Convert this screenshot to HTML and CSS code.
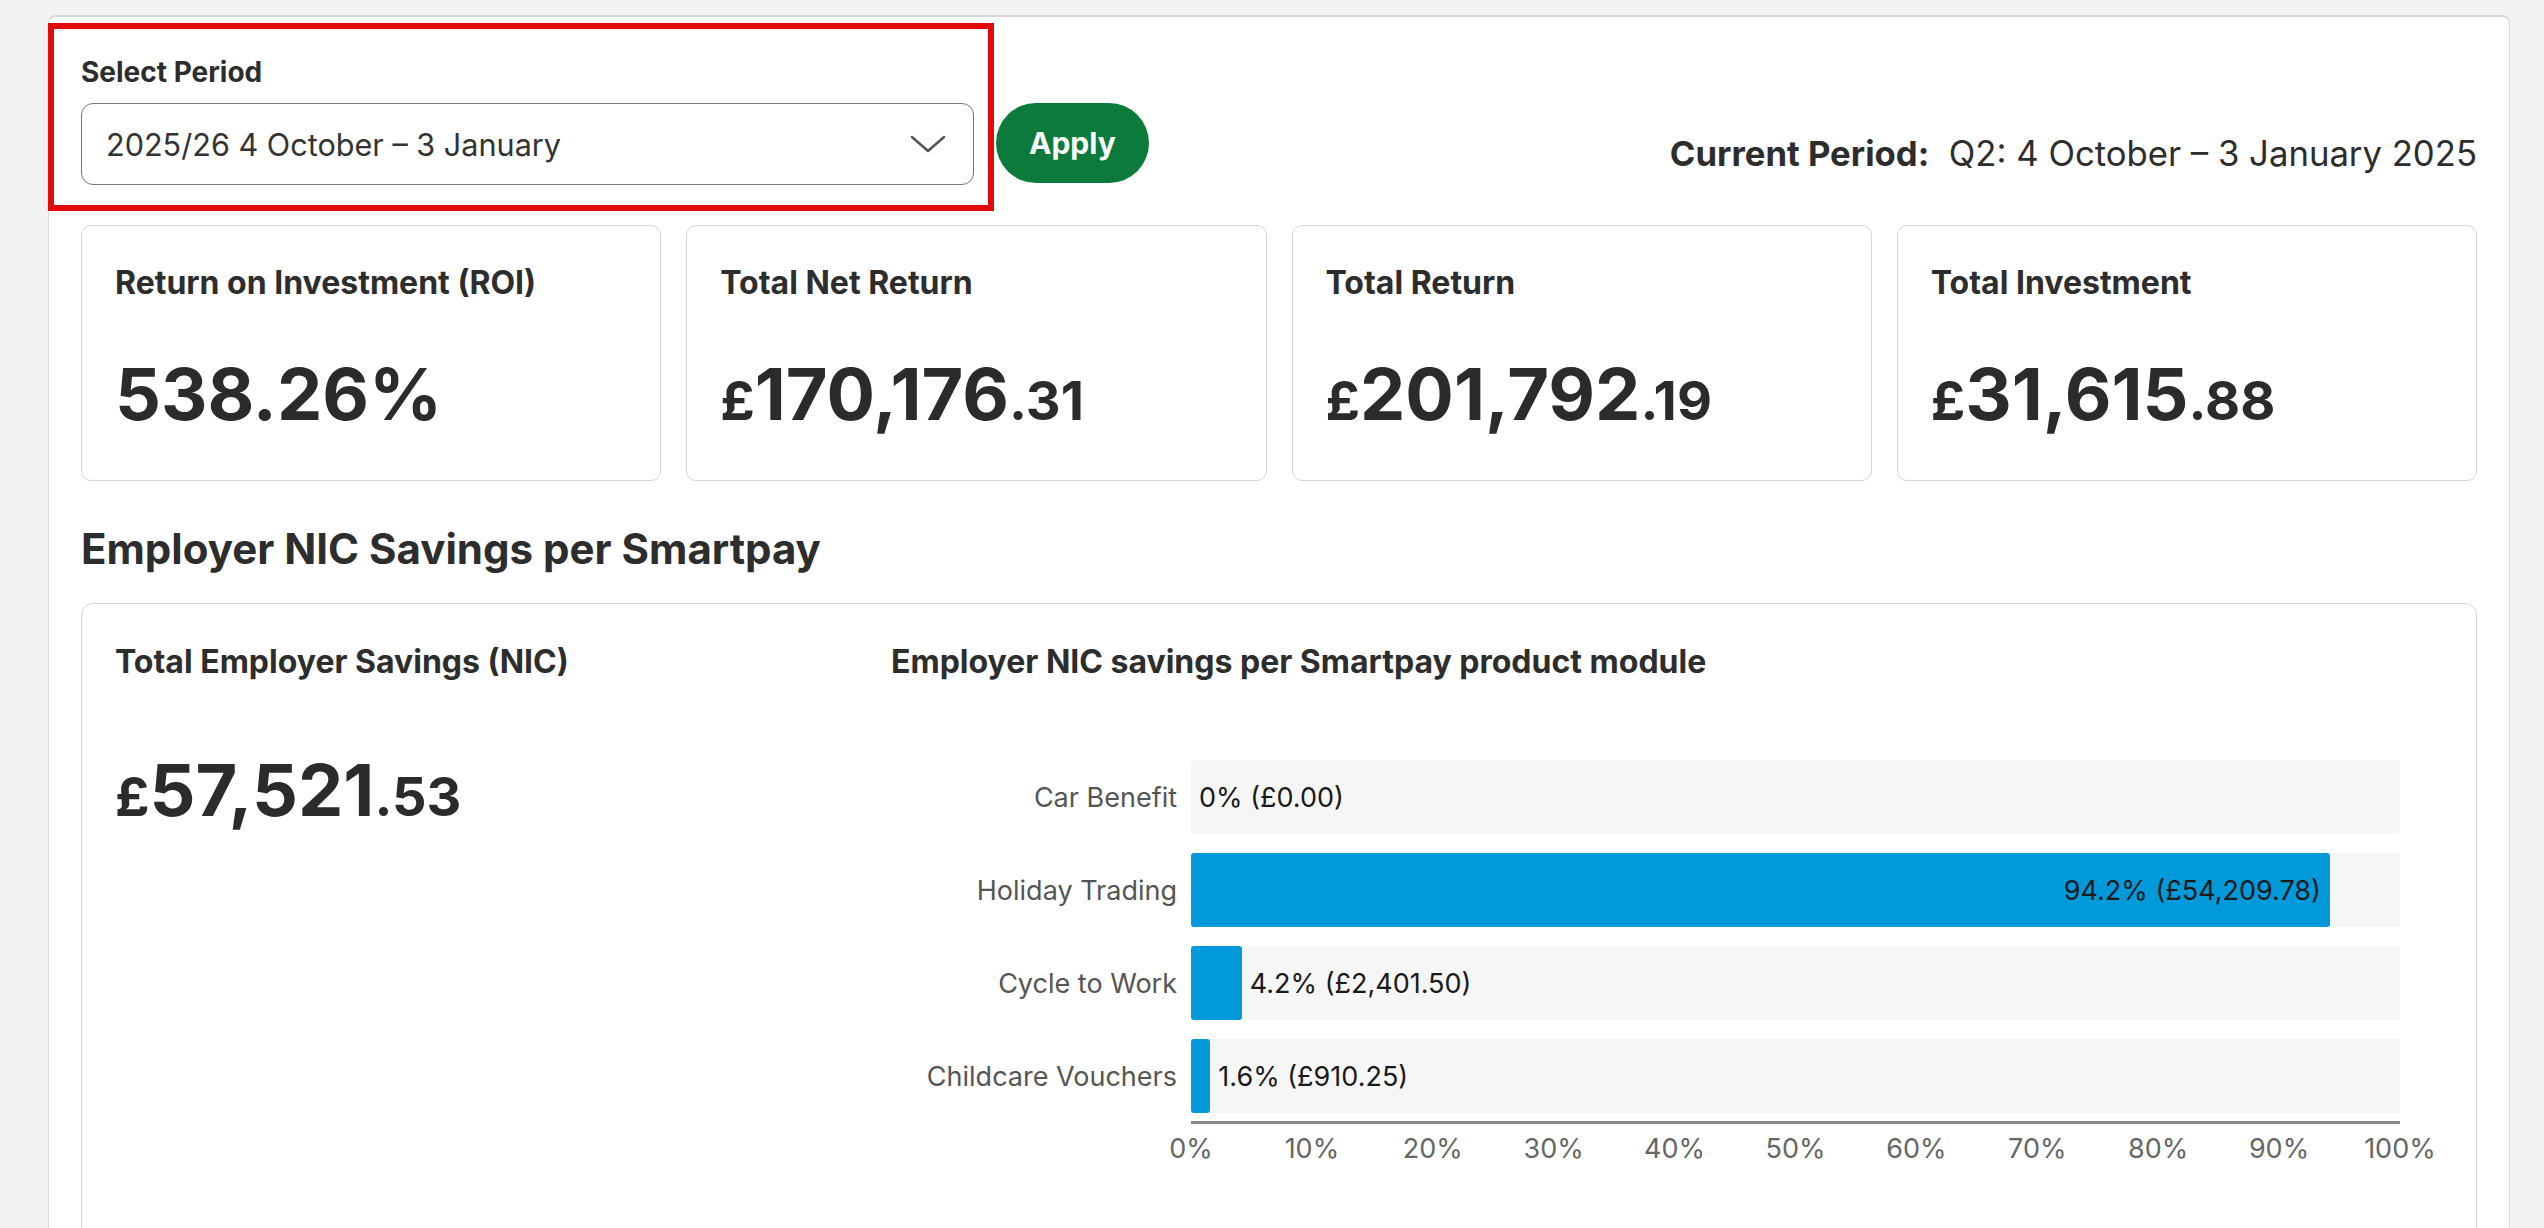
FILE: index.html
```html
<!DOCTYPE html>
<html lang="en">
<head>
    <meta charset="UTF-8">
    <meta name="viewport" content="width=device-width, initial-scale=1.0">
    <title>Smartpay ROI</title>
    <link rel="stylesheet" href="styles.css">
</head>
<body>
    <div class="page">
        <div class="panel">
            <!-- Period picker -->
            <div class="toolbar">
                <form class="period-form">
                    <div class="period-field">
                        <label class="field-label">Select Period</label>
                        <div class="select">
                            <span class="select-value">2025/26 4 October – 3 January</span>
                            <svg class="chevron" width="38" height="20" viewBox="0 0 38 20">
                                <path d="M3 3 L19 17 L35 3" fill="none" stroke="#555" stroke-width="2.5" stroke-linecap="round" stroke-linejoin="round"/>
                            </svg>
                        </div>
                    </div>
                    <button class="btn-apply" type="button">Apply</button>
                </form>
                <div class="current-period"><strong>Current Period:</strong>&nbsp; Q2: 4 October – 3 January 2025</div>
            </div>

            <!-- Headline figures -->
            <div class="stats">
                <div class="stat-card">
                    <div class="stat-title">Return on Investment (ROI)</div>
                    <div class="stat-value">538.26%</div>
                </div>
                <div class="stat-card">
                    <div class="stat-title">Total Net Return</div>
                    <div class="stat-value"><span class="small">£</span>170,176<span class="small">.31</span></div>
                </div>
                <div class="stat-card">
                    <div class="stat-title">Total Return</div>
                    <div class="stat-value"><span class="small">£</span>201,792<span class="small">.19</span></div>
                </div>
                <div class="stat-card">
                    <div class="stat-title">Total Investment</div>
                    <div class="stat-value"><span class="small">£</span>31,615<span class="small">.88</span></div>
                </div>
            </div>

            <h2 class="section-title">Employer NIC Savings per Smartpay</h2>

            <div class="savings-panel">
                <div class="savings-total">
                    <div class="stat-title">Total Employer Savings (NIC)</div>
                    <div class="stat-value total-value"><span class="small">£</span>57,521<span class="small">.53</span></div>
                </div>
                <div class="savings-chart">
                    <div class="stat-title">Employer NIC savings per Smartpay product module</div>
                    <div class="bar-chart">
                        <div class="bar-rows">
                            <div class="bar-row">
                                <span class="bar-label">Car Benefit</span>
                                <div class="bar-track">
                                    <div class="bar-fill" style="width: 0%"></div>
                                    <span class="bar-value">0% (£0.00)</span>
                                </div>
                            </div>
                            <div class="bar-row">
                                <span class="bar-label">Holiday Trading</span>
                                <div class="bar-track">
                                    <div class="bar-fill" style="width: 94.2%"><span class="bar-value inside">94.2% (£54,209.78)</span></div>
                                </div>
                            </div>
                            <div class="bar-row">
                                <span class="bar-label">Cycle to Work</span>
                                <div class="bar-track">
                                    <div class="bar-fill" style="width: 4.2%"></div>
                                    <span class="bar-value">4.2% (£2,401.50)</span>
                                </div>
                            </div>
                            <div class="bar-row">
                                <span class="bar-label">Childcare Vouchers</span>
                                <div class="bar-track">
                                    <div class="bar-fill" style="width: 1.6%"></div>
                                    <span class="bar-value">1.6% (£910.25)</span>
                                </div>
                            </div>
                        </div>
                        <div class="bar-axis">
                            <span class="tick">0%</span>
                            <span class="tick">10%</span>
                            <span class="tick">20%</span>
                            <span class="tick">30%</span>
                            <span class="tick">40%</span>
                            <span class="tick">50%</span>
                            <span class="tick">60%</span>
                            <span class="tick">70%</span>
                            <span class="tick">80%</span>
                            <span class="tick">90%</span>
                            <span class="tick">100%</span>
                        </div>
                    </div>
                </div>
            </div>
        </div>
    </div>
</body>
</html>
```

FILE: styles.css
```css
body {
    margin: 0;
    padding: 0;
    height: 100vh;
    background-color: #f2f2f2;
    font-family: Inter, "Noto Sans", Arial, sans-serif;
    color: #2d2d2d;
    overflow: hidden;
}

.page {
    padding: 15px 34px 0 48px;
}

.panel {
    background: #fff;
    border: 1px solid #dcdcdc;
    border-top: 2px solid #d8d8d8;
    border-radius: 8px;
    padding: 39px 32px 60px;
    min-height: 1300px;
}

/* toolbar */
.toolbar {
    display: flex;
    justify-content: space-between;
    align-items: flex-end;
}

.period-form {
    display: flex;
    align-items: flex-end;
    gap: 22px;
}

.period-field {
    position: relative;
    display: flex;
    flex-direction: column;
    gap: 15px;
}

/* red highlight drawn round the picker */
.period-field::after {
    content: "";
    position: absolute;
    left: -33px;
    right: -20px;
    top: -33px;
    bottom: -26px;
    border: 6px solid #e30a0a;
    pointer-events: none;
}

.field-label {
    font-size: 28px;
    font-weight: 700;
    line-height: 32px;
}

.select {
    width: 893px;
    height: 82px;
    box-sizing: border-box;
    border: 1.5px solid #777;
    border-radius: 12px;
    display: flex;
    align-items: center;
    justify-content: space-between;
    padding: 0 26px 0 24px;
}

.select-value {
    font-size: 30.6px;
    color: #333;
}

.btn-apply {
    height: 80px;
    padding: 0 33px;
    margin-bottom: 2px;
    border: none;
    border-radius: 40px;
    background: #0b7a3b;
    color: #fff;
    font-family: inherit;
    font-size: 30px;
    font-weight: 700;
}

.current-period {
    font-size: 34.7px;
    line-height: 38px;
    margin-bottom: 13px;
}

.current-period strong {
    font-weight: 700;
}

/* cards */
.stats {
    display: grid;
    grid-template-columns: repeat(4, 1fr);
    gap: 25px;
    margin-top: 40px;
}

.stat-card {
    border: 1px solid #d6d6d6;
    border-radius: 10px;
    padding: 39px 33px 43px;
}

.stat-title {
    font-size: 32px;
    font-weight: 700;
    line-height: 36px;
}

.stat-value {
    margin-top: 57px;
    font-size: 72px;
    font-weight: 700;
    line-height: 72px;
    color: #2b2b2b;
}

.stat-value .small {
    font-size: 54px;
}

.section-title {
    margin: 44px 0 30px;
    font-size: 42px;
    font-weight: 700;
    line-height: 48px;
}

/* savings panel */
.savings-panel {
    display: grid;
    grid-template-columns: 776px 1fr;
    border: 1px solid #d6d6d6;
    border-radius: 12px;
    padding: 40px 33px 80px;
    min-height: 700px;
}

.total-value {
    margin-top: 74px;
}

.bar-chart {
    margin-top: 80px;
}

.bar-rows {
    display: flex;
    flex-direction: column;
    gap: 19px;
}

.bar-row {
    display: grid;
    grid-template-columns: 286px 1209px;
    column-gap: 14px;
    align-items: center;
}

.bar-label {
    text-align: right;
    font-size: 27px;
    color: #555;
}

.bar-track {
    display: flex;
    align-items: center;
    height: 74px;
    background: #f6f6f6;
    border-radius: 3px;
}

.bar-fill {
    height: 100%;
    background: #0099da;
    border-radius: 3px;
    display: flex;
    align-items: center;
    justify-content: flex-end;
}

.bar-value {
    font-size: 27px;
    color: #1a1a1a;
    margin-left: 8px;
    white-space: nowrap;
}

.bar-value.inside {
    margin: 0 9px 0 0;
}

.bar-axis {
    margin: 8px 0 0 300px;
    width: 1209px;
    border-top: 3px solid #888;
    padding-top: 10px;
    display: flex;
    justify-content: space-between;
}

.tick {
    width: 0;
    display: flex;
    justify-content: center;
    font-size: 27px;
    line-height: 30px;
    color: #666;
    white-space: nowrap;
}
```
